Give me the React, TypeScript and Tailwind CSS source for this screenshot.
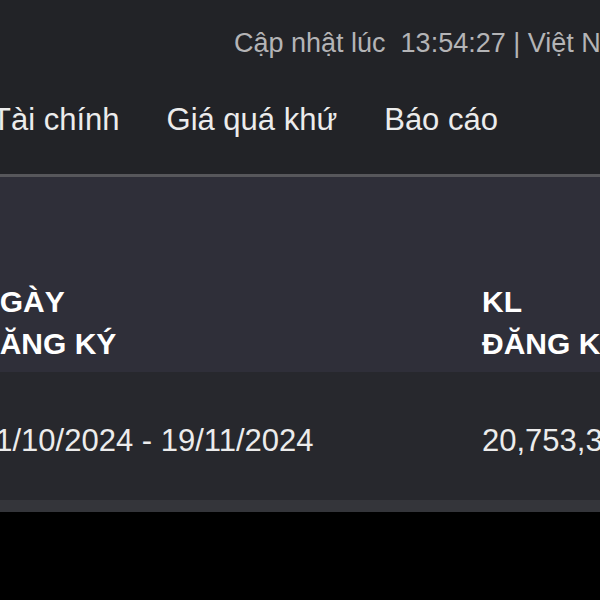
export default function App() {
  return (
    <div className="w-[600px] h-[600px] overflow-hidden bg-black font-['Liberation_Sans',Arial,sans-serif]">
      <div className="h-[174px] bg-[#222327] flex flex-col">
        <div className="pl-[234px] pt-[26px] whitespace-nowrap text-[27px] leading-[34px] text-[#b4b4b6]">
          Cập nhật lúc&nbsp;&nbsp;13:54:27 | Việt Nam
        </div>
        <nav className="flex gap-[47px] -ml-[8px] pt-[41px] whitespace-nowrap text-[31px] leading-[38px] text-[#ececec]">
          <span>Tài chính</span>
          <span>Giá quá khứ</span>
          <span>Báo cáo</span>
        </nav>
      </div>
      <div className="h-[3px] bg-[#57575b]" />
      <div className="h-[195px] bg-[#2f2f39] flex items-end pb-[7px] -ml-[22px] whitespace-nowrap">
        <div className="w-[504px] shrink-0 text-[30px] leading-[42px] font-bold text-white">
          NGÀY
          <br />
          ĐĂNG KÝ
        </div>
        <div className="shrink-0 text-[30px] leading-[42px] font-bold text-white">
          KL
          <br />
          ĐĂNG KÝ
        </div>
      </div>
      <div className="h-[128px] bg-[#27282d] flex items-center pt-[11px] -ml-[22px] whitespace-nowrap text-[31px] text-[#ececec]">
        <div className="w-[504px] shrink-0">21/10/2024 - 19/11/2024</div>
        <div className="shrink-0">20,753,300</div>
      </div>
      <div className="h-[12px] bg-[#34353a]" />
    </div>
  );
}
